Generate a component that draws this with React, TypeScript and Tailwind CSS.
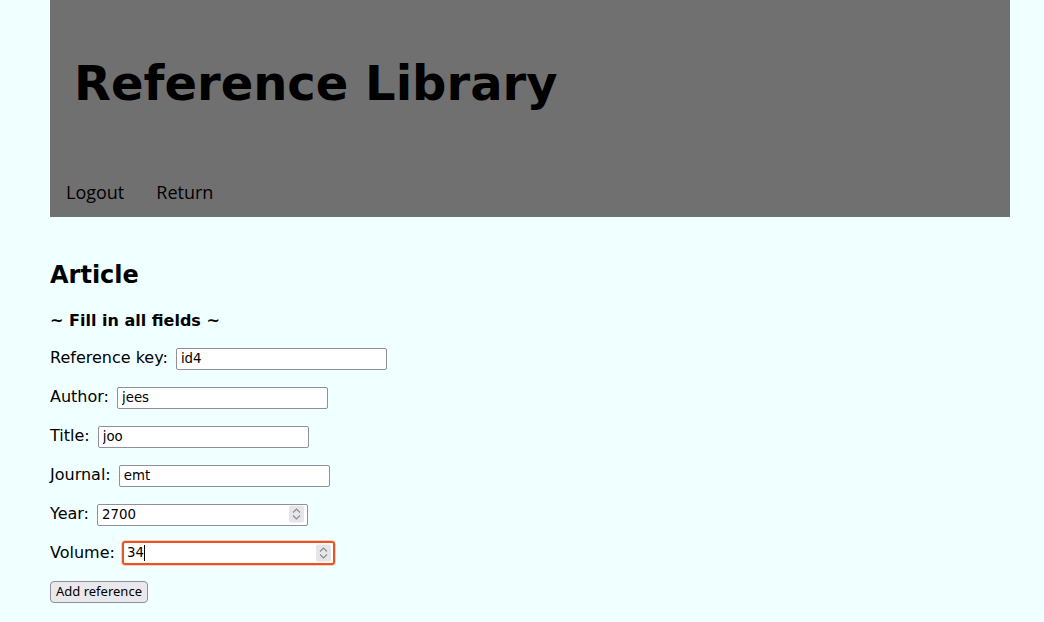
import { useState } from 'react'

const sans = { fontFamily: '"DejaVu Sans", sans-serif' }

function Spinner() {
  return (
    <span className="absolute right-[4px] top-1/2 -translate-y-1/2 w-[15px] h-[17px] bg-[#e6e6ea] rounded-[2px] flex flex-col items-center justify-center gap-[1px]">
      <svg width="9" height="6" viewBox="0 0 9 6" fill="none" stroke="#8a8a8f" strokeWidth="1.1">
        <path d="M1 5 L4.5 1.5 L8 5" />
      </svg>
      <svg width="9" height="6" viewBox="0 0 9 6" fill="none" stroke="#8a8a8f" strokeWidth="1.1">
        <path d="M1 1 L4.5 4.5 L8 1" />
      </svg>
    </span>
  )
}

function Field({ label, value, number, focused }: { label: string; value: string; number?: boolean; focused?: boolean }) {
  const [v, setV] = useState(value)
  return (
    <div className="flex items-center h-[22px] text-[16px] text-black font-['DejaVu_Sans',sans-serif]">
      <span className="mr-[8px]">{label}</span>
      {focused ? (
        <span className="relative inline-block w-[215px] h-[26px] -mx-[2px] rounded-[4px] border border-[#f8cdbd] p-0">
          <span className="absolute inset-0 rounded-[3px] border-2 border-[#e95420] bg-white flex items-center pl-[3px]">
            <span className="text-[13.33px] leading-none">{v}</span>
            <span className="inline-block w-[1px] h-[16px] bg-black" />
          </span>
          {number && <Spinner />}
        </span>
      ) : (
        <span className="relative inline-block">
          <input
            value={v}
            onChange={e => setV(e.target.value)}
            className="w-[211px] h-[22px] border border-[#8f8f9d] rounded-[2px] bg-white px-[4px] text-[13.33px] text-black outline-none font-['DejaVu_Sans',sans-serif]"
          />
          {number && <Spinner />}
        </span>
      )}
    </div>
  )
}

export default function App() {
  return (
    <div className="min-h-screen w-full bg-[#f0ffff]" style={sans}>
      <header className="ml-[50px] w-[960px] h-[217px] bg-[#707070] flex flex-col">
        <h1 className="pt-[55px] pl-[24px] text-[48px] leading-[56px] font-bold text-black font-['DejaVu_Sans',sans-serif]">
          Reference Library
        </h1>
        <nav className="mt-auto h-[48px] pb-[2px] flex items-center text-[18px] text-black font-['Open_Sans',sans-serif]">
          <a className="px-4 cursor-pointer">Logout</a>
          <a className="px-4 cursor-pointer">Return</a>
        </nav>
      </header>

      <main className="pl-[50px]">
        <h2 className="pt-[44px] text-[24px] leading-[28px] font-bold text-black">Article</h2>
        <p className="mt-[22px] text-[16px] leading-[19px] font-bold text-black">~ Fill in all fields ~</p>
        <form className="mt-[17px] flex flex-col gap-[17px]" onSubmit={e => e.preventDefault()}>
          <Field label="Reference key:" value="id4" />
          <Field label="Author:" value="jees" />
          <Field label="Title:" value="joo" />
          <Field label="Journal:" value="emt" />
          <Field label="Year:" value="2700" number />
          <Field label="Volume:" value="34" number focused />
          <div className="-mt-[2px]">
            <button
              type="submit"
              className="h-[22px] px-[5px] bg-[#e9e9ed] border border-[#8f8f9d] rounded-[4px] text-[13px] leading-none text-black font-['Noto_Sans',sans-serif]"
            >
              Add reference
            </button>
          </div>
        </form>
      </main>
    </div>
  )
}
